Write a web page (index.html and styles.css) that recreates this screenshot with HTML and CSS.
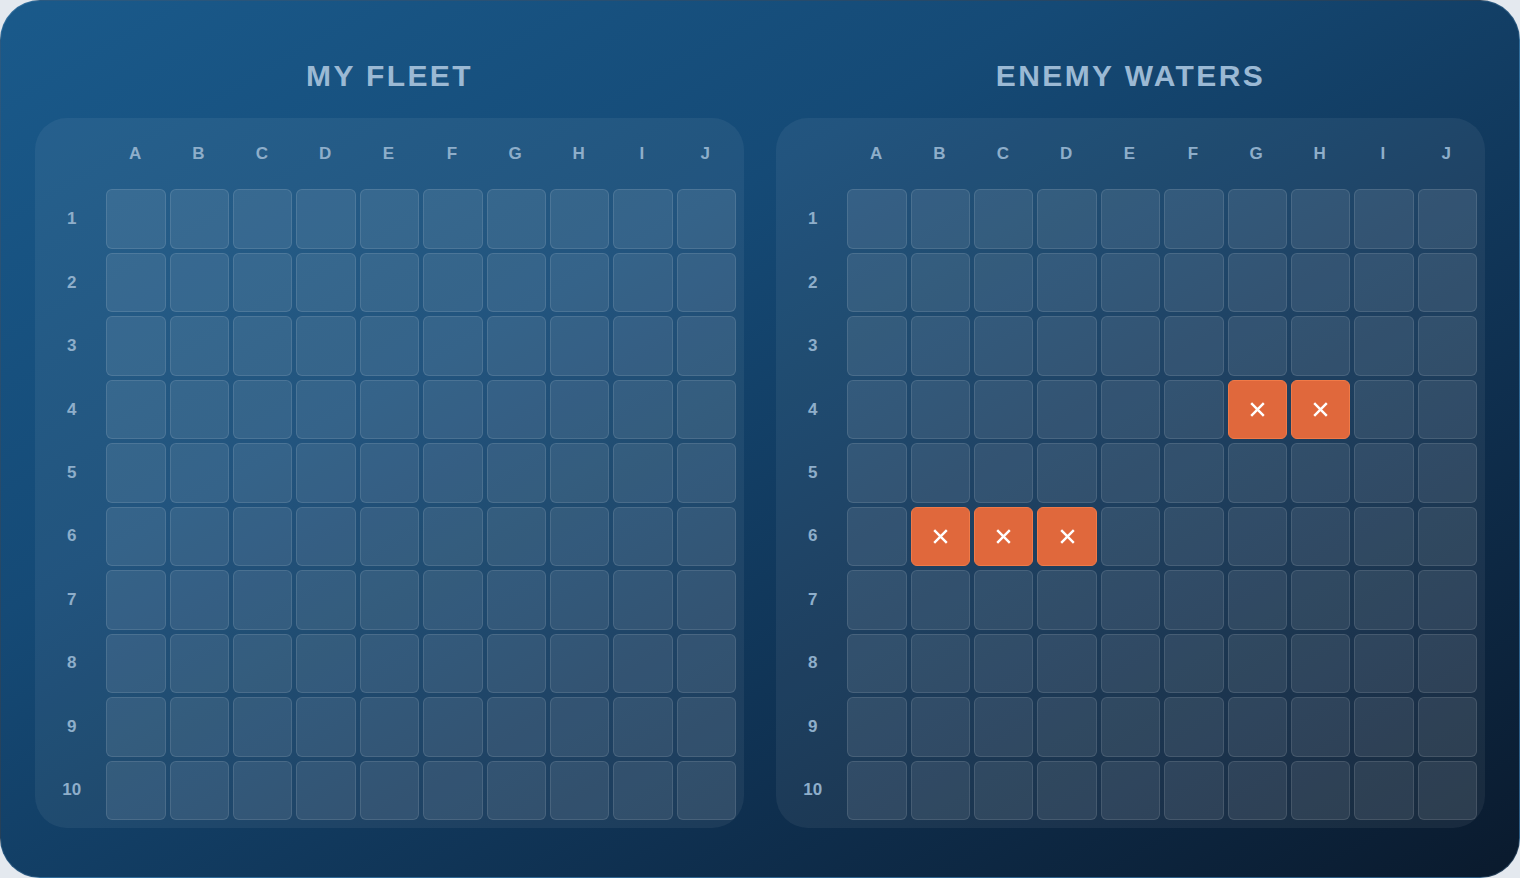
FILE: index.html
```html
<!DOCTYPE html>
<html lang="en">
<head>
<meta charset="utf-8">
<title>Battleship</title>
<link rel="stylesheet" href="styles.css">
</head>
<body>
<main class="game">
  <section class="side">
    <h2 class="side-title">MY FLEET</h2>
    <div class="board">
      <span></span><span class="lbl">A</span><span class="lbl">B</span><span class="lbl">C</span><span class="lbl">D</span><span class="lbl">E</span><span class="lbl">F</span><span class="lbl">G</span><span class="lbl">H</span><span class="lbl">I</span><span class="lbl">J</span>
      <span class="lbl">1</span><i class="cell"></i><i class="cell"></i><i class="cell"></i><i class="cell"></i><i class="cell"></i><i class="cell"></i><i class="cell"></i><i class="cell"></i><i class="cell"></i><i class="cell"></i>
      <span class="lbl">2</span><i class="cell"></i><i class="cell"></i><i class="cell"></i><i class="cell"></i><i class="cell"></i><i class="cell"></i><i class="cell"></i><i class="cell"></i><i class="cell"></i><i class="cell"></i>
      <span class="lbl">3</span><i class="cell"></i><i class="cell"></i><i class="cell"></i><i class="cell"></i><i class="cell"></i><i class="cell"></i><i class="cell"></i><i class="cell"></i><i class="cell"></i><i class="cell"></i>
      <span class="lbl">4</span><i class="cell"></i><i class="cell"></i><i class="cell"></i><i class="cell"></i><i class="cell"></i><i class="cell"></i><i class="cell"></i><i class="cell"></i><i class="cell"></i><i class="cell"></i>
      <span class="lbl">5</span><i class="cell"></i><i class="cell"></i><i class="cell"></i><i class="cell"></i><i class="cell"></i><i class="cell"></i><i class="cell"></i><i class="cell"></i><i class="cell"></i><i class="cell"></i>
      <span class="lbl">6</span><i class="cell"></i><i class="cell"></i><i class="cell"></i><i class="cell"></i><i class="cell"></i><i class="cell"></i><i class="cell"></i><i class="cell"></i><i class="cell"></i><i class="cell"></i>
      <span class="lbl">7</span><i class="cell"></i><i class="cell"></i><i class="cell"></i><i class="cell"></i><i class="cell"></i><i class="cell"></i><i class="cell"></i><i class="cell"></i><i class="cell"></i><i class="cell"></i>
      <span class="lbl">8</span><i class="cell"></i><i class="cell"></i><i class="cell"></i><i class="cell"></i><i class="cell"></i><i class="cell"></i><i class="cell"></i><i class="cell"></i><i class="cell"></i><i class="cell"></i>
      <span class="lbl">9</span><i class="cell"></i><i class="cell"></i><i class="cell"></i><i class="cell"></i><i class="cell"></i><i class="cell"></i><i class="cell"></i><i class="cell"></i><i class="cell"></i><i class="cell"></i>
      <span class="lbl">10</span><i class="cell"></i><i class="cell"></i><i class="cell"></i><i class="cell"></i><i class="cell"></i><i class="cell"></i><i class="cell"></i><i class="cell"></i><i class="cell"></i><i class="cell"></i>
    </div>
  </section>
  <section class="side">
    <h2 class="side-title">ENEMY WATERS</h2>
    <div class="board">
      <span></span><span class="lbl">A</span><span class="lbl">B</span><span class="lbl">C</span><span class="lbl">D</span><span class="lbl">E</span><span class="lbl">F</span><span class="lbl">G</span><span class="lbl">H</span><span class="lbl">I</span><span class="lbl">J</span>
      <span class="lbl">1</span><i class="cell"></i><i class="cell"></i><i class="cell"></i><i class="cell"></i><i class="cell"></i><i class="cell"></i><i class="cell"></i><i class="cell"></i><i class="cell"></i><i class="cell"></i>
      <span class="lbl">2</span><i class="cell"></i><i class="cell"></i><i class="cell"></i><i class="cell"></i><i class="cell"></i><i class="cell"></i><i class="cell"></i><i class="cell"></i><i class="cell"></i><i class="cell"></i>
      <span class="lbl">3</span><i class="cell"></i><i class="cell"></i><i class="cell"></i><i class="cell"></i><i class="cell"></i><i class="cell"></i><i class="cell"></i><i class="cell"></i><i class="cell"></i><i class="cell"></i>
      <span class="lbl">4</span><i class="cell"></i><i class="cell"></i><i class="cell"></i><i class="cell"></i><i class="cell"></i><i class="cell"></i>
      <i class="cell hit"><svg viewBox="0 0 20 20"><path d="M4 4L16 16M16 4L4 16"/></svg></i>
      <i class="cell hit"><svg viewBox="0 0 20 20"><path d="M4 4L16 16M16 4L4 16"/></svg></i>
      <i class="cell"></i><i class="cell"></i>
      <span class="lbl">5</span><i class="cell"></i><i class="cell"></i><i class="cell"></i><i class="cell"></i><i class="cell"></i><i class="cell"></i><i class="cell"></i><i class="cell"></i><i class="cell"></i><i class="cell"></i>
      <span class="lbl">6</span><i class="cell"></i>
      <i class="cell hit"><svg viewBox="0 0 20 20"><path d="M4 4L16 16M16 4L4 16"/></svg></i>
      <i class="cell hit"><svg viewBox="0 0 20 20"><path d="M4 4L16 16M16 4L4 16"/></svg></i>
      <i class="cell hit"><svg viewBox="0 0 20 20"><path d="M4 4L16 16M16 4L4 16"/></svg></i>
      <i class="cell"></i><i class="cell"></i><i class="cell"></i><i class="cell"></i><i class="cell"></i><i class="cell"></i>
      <span class="lbl">7</span><i class="cell"></i><i class="cell"></i><i class="cell"></i><i class="cell"></i><i class="cell"></i><i class="cell"></i><i class="cell"></i><i class="cell"></i><i class="cell"></i><i class="cell"></i>
      <span class="lbl">8</span><i class="cell"></i><i class="cell"></i><i class="cell"></i><i class="cell"></i><i class="cell"></i><i class="cell"></i><i class="cell"></i><i class="cell"></i><i class="cell"></i><i class="cell"></i>
      <span class="lbl">9</span><i class="cell"></i><i class="cell"></i><i class="cell"></i><i class="cell"></i><i class="cell"></i><i class="cell"></i><i class="cell"></i><i class="cell"></i><i class="cell"></i><i class="cell"></i>
      <span class="lbl">10</span><i class="cell"></i><i class="cell"></i><i class="cell"></i><i class="cell"></i><i class="cell"></i><i class="cell"></i><i class="cell"></i><i class="cell"></i><i class="cell"></i><i class="cell"></i>
    </div>
  </section>
</main>
</body>
</html>
```
FILE: styles.css
```css
* { box-sizing: border-box; }

html, body {
  margin: 0;
  height: 100%;
}

body {
  background: #e4e9ef;
  font-family: "Liberation Sans", Arial, sans-serif;
}

.game {
  width: 1520px;
  height: 878px;
  display: flex;
  gap: 32px;
  padding: 0 34px;
  border-radius: 40px;
  border: 1px solid rgba(120, 170, 210, 0.25);
  background: linear-gradient(150deg, #1a5a8b 0%, #154a76 35%, #0f3050 70%, #0a1a2d 100%);
  overflow: hidden;
}

.side {
  flex: 1;
  display: flex;
  flex-direction: column;
}

.side-title {
  margin: 55px 0 22px;
  height: 40px;
  line-height: 40px;
  text-align: center;
  font-size: 30px;
  font-weight: 700;
  letter-spacing: 2.4px;
  color: #9bb9d4;
}

.board {
  display: grid;
  grid-template-columns: repeat(11, 1fr);
  grid-template-rows: repeat(11, 1fr);
  gap: 4px;
  padding: 8px;
  height: 710px;
  border-radius: 32px;
  background: rgba(255, 255, 255, 0.06);
}

.lbl {
  display: flex;
  align-items: center;
  justify-content: center;
  font-size: 17px;
  font-weight: 700;
  color: #8eaeca;
}

/* column letters sit a little above the row centre */
.board > .lbl:nth-child(-n+11) {
  padding: 0 2px 4px 0;
}

/* row numbers */
.board > .lbl:nth-child(n+12) {
  padding-right: 2px;
}

.cell {
  display: flex;
  align-items: center;
  justify-content: center;
  border-radius: 6px;
  background: rgba(255, 255, 255, 0.09);
  border: 1.5px solid rgba(255, 255, 255, 0.11);
}

.cell.hit {
  background: #e0683c;
  border-color: #f07a48;
}

.cell svg {
  width: 21px;
  height: 21px;
  fill: none;
  stroke: #ffffff;
  stroke-width: 2.3;
}
```
